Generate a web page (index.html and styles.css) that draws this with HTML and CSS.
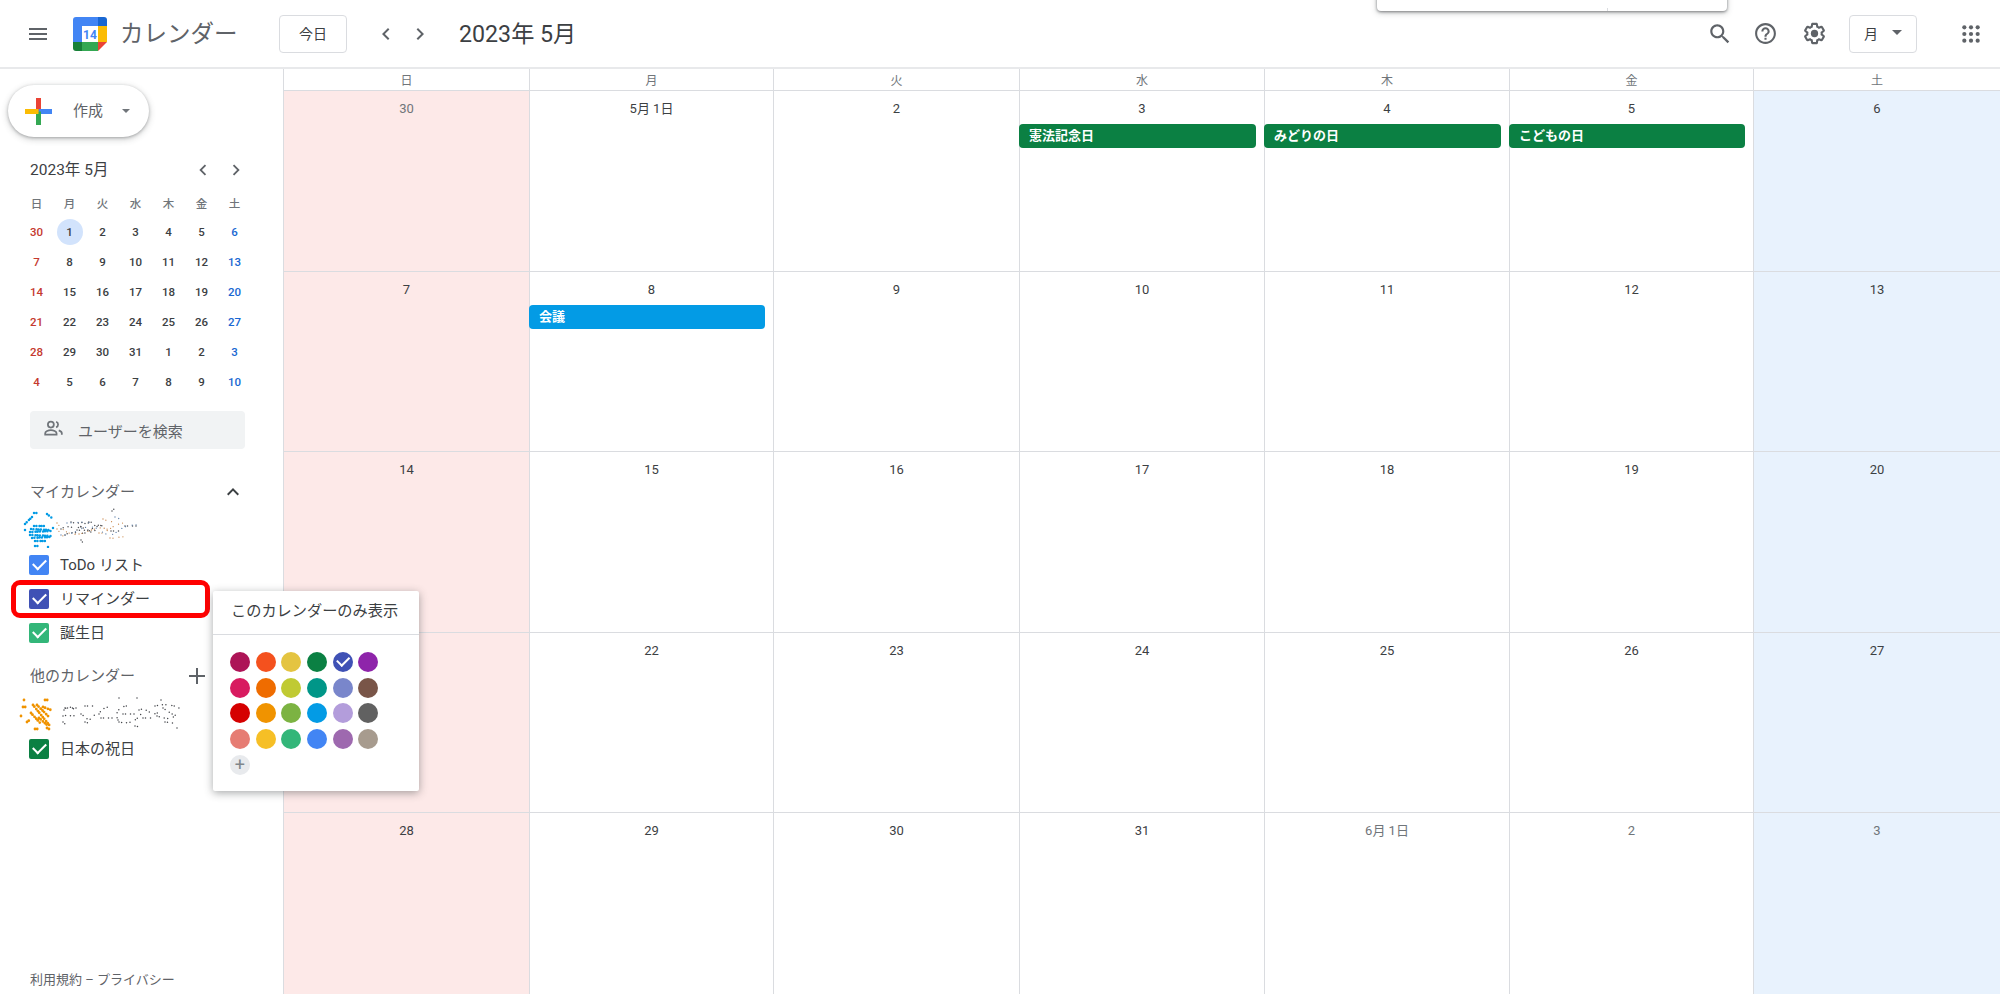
FILE: index.html
```html
<!DOCTYPE html>
<html lang="ja">
<head>
    <meta charset="UTF-8">
    <title>カレンダー</title>
    <link rel="stylesheet" href="styles.css">
</head>

<body>
<div class="top-bar">
    <svg class="ico menu-ico" viewBox="0 0 24 24"><path d="M3 18h18v-2H3v2zm0-5h18v-2H3v2zm0-7v2h18V6H3z"/></svg>
    <svg class="logo" viewBox="0 0 34 34">
        <path d="M9 34H3a3 3 0 0 1-3-3v-6h9z" fill="#188038"/>
        <path d="M25 9V0h6a3 3 0 0 1 3 3v6z" fill="#1967d2"/>
        <rect x="25" y="9" width="9" height="16" fill="#fbbc04"/>
        <rect x="9" y="25" width="16" height="9" fill="#34a853"/>
        <path d="M0 25V3a3 3 0 0 1 3-3h22v9H9v16z" fill="#4285f4"/>
        <path d="M25 25h9l-9 9z" fill="#ea4335"/>
        <text class="logo-num" x="17" y="21.5" text-anchor="middle">14</text>
    </svg>
    <span class="app-name">カレンダー</span>
    <button class="btn today-btn">今日</button>
    <svg class="ico prev-ico" viewBox="0 0 24 24"><path d="M15.41 7.41 14 6l-6 6 6 6 1.41-1.41L10.83 12z"/></svg>
    <svg class="ico next-ico" viewBox="0 0 24 24"><path d="M8.59 16.59 10 18l6-6-6-6-1.41 1.41L13.17 12z"/></svg>
    <span class="cur-month">2023年 5月</span>
    <div class="top-right">
        <svg class="ico search-ico" viewBox="0 0 24 24"><path d="M15.5 14h-.79l-.28-.27C15.41 12.59 16 11.11 16 9.5 16 5.91 13.09 3 9.5 3S3 5.91 3 9.5 5.91 16 9.5 16c1.61 0 3.09-.59 4.23-1.57l.27.28v.79l5 4.99L20.49 19l-4.99-5zm-6 0C7.01 14 5 11.99 5 9.5S7.01 5 9.5 5 14 7.01 14 9.5 11.99 14 9.5 14z"/></svg>
        <svg class="ico help-ico" viewBox="0 0 24 24"><path d="M11 18h2v-2h-2v2zm1-16C6.48 2 2 6.48 2 12s4.48 10 10 10 10-4.48 10-10S17.52 2 12 2zm0 18c-4.41 0-8-3.59-8-8s3.59-8 8-8 8 3.59 8 8-3.59 8-8 8zm0-14c-2.21 0-4 1.79-4 4h2c0-1.1.9-2 2-2s2 .9 2 2c0 2-3 1.75-3 5h2c0-2.25 3-2.5 3-5 0-2.21-1.79-4-4-4z"/></svg>
        <svg class="ico gear-ico" viewBox="0 0 24 24"><path d="M13.85 22.25h-3.7c-.74 0-1.36-.54-1.45-1.27l-.27-1.89c-.27-.14-.53-.29-.79-.46l-1.8.72c-.7.26-1.47-.03-1.81-.65L2.2 15.53c-.35-.66-.2-1.44.36-1.88l1.53-1.19c-.01-.15-.02-.3-.02-.46 0-.15.01-.31.02-.46l-1.52-1.19c-.59-.45-.74-1.26-.37-1.88l1.85-3.19c.34-.62 1.11-.9 1.79-.63l1.81.73c.26-.17.52-.32.78-.46l.27-1.91c.09-.7.71-1.25 1.44-1.25h3.7c.74 0 1.36.54 1.45 1.27l.27 1.89c.27.14.53.29.79.46l1.8-.72c.71-.26 1.48.03 1.82.65l1.84 3.18c.36.66.2 1.44-.36 1.88l-1.52 1.19c.01.15.02.3.02.46s-.01.31-.02.46l1.52 1.19c.56.45.72 1.23.37 1.86l-1.86 3.22c-.34.62-1.11.9-1.8.63l-1.8-.72c-.26.17-.52.32-.78.46l-.27 1.91c-.1.68-.72 1.22-1.46 1.22zm-3.23-2h2.76l.37-2.55.53-.22c.44-.18.88-.44 1.34-.78l.45-.34 2.38.96 1.38-2.4-2.03-1.58.07-.56c.03-.26.06-.51.06-.78s-.03-.53-.06-.78l-.07-.56 2.03-1.58-1.39-2.4-2.39.96-.45-.35c-.42-.32-.87-.58-1.33-.77l-.52-.22-.37-2.55h-2.76l-.37 2.55-.53.21c-.44.19-.88.44-1.34.79l-.45.33-2.38-.95-1.39 2.39 2.03 1.58-.07.56a7 7 0 0 0-.06.79c0 .26.02.53.06.78l.07.56-2.03 1.58 1.38 2.4 2.39-.96.45.35c.43.33.86.58 1.33.77l.53.22.38 2.55z"/><circle cx="12" cy="12" r="3.5"/></svg>
        <button class="btn view-btn">月<i class="caret"></i></button>
        <svg class="ico apps-ico" viewBox="0 0 24 24">
            <circle cx="4" cy="4" r="2.5"/><circle cx="12" cy="4" r="2.5"/><circle cx="20" cy="4" r="2.5"/>
            <circle cx="4" cy="12" r="2.5"/><circle cx="12" cy="12" r="2.5"/><circle cx="20" cy="12" r="2.5"/>
            <circle cx="4" cy="20" r="2.5"/><circle cx="12" cy="20" r="2.5"/><circle cx="20" cy="20" r="2.5"/>
        </svg>
    </div>
</div>

<div class="main">
    <div class="side">
        <button class="create-btn">
            <svg class="plus-color" viewBox="0 0 27 27">
                <rect x="11" y="0" width="5" height="13.5" fill="#ea4335"/>
                <rect x="13.5" y="11" width="13.5" height="5" fill="#4285f4"/>
                <rect x="11" y="13.5" width="5" height="13.5" fill="#34a853"/>
                <rect x="0" y="11" width="13.5" height="5" fill="#fbbc04"/>
            </svg>
            <span>作成</span>
            <i class="caret"></i>
        </button>

        <div class="mini-head">
            <span class="mini-title">2023年 5月</span>
            <svg class="ico mini-prev" viewBox="0 0 24 24"><path d="M15.41 7.41 14 6l-6 6 6 6 1.41-1.41L10.83 12z"/></svg>
            <svg class="ico mini-next" viewBox="0 0 24 24"><path d="M8.59 16.59 10 18l6-6-6-6-1.41 1.41L13.17 12z"/></svg>
        </div>
        <div class="mini-week">
            <span>日</span><span>月</span><span>火</span><span>水</span><span>木</span><span>金</span><span>土</span>
        </div>
        <div class="mini-days">
            <span class="sun">30</span><span class="today">1</span><span>2</span><span>3</span><span>4</span><span>5</span><span class="sat">6</span>
            <span class="sun">7</span><span>8</span><span>9</span><span>10</span><span>11</span><span>12</span><span class="sat">13</span>
            <span class="sun">14</span><span>15</span><span>16</span><span>17</span><span>18</span><span>19</span><span class="sat">20</span>
            <span class="sun">21</span><span>22</span><span>23</span><span>24</span><span>25</span><span>26</span><span class="sat">27</span>
            <span class="sun">28</span><span>29</span><span>30</span><span>31</span><span>1</span><span>2</span><span class="sat">3</span>
            <span class="sun">4</span><span>5</span><span>6</span><span>7</span><span>8</span><span>9</span><span class="sat">10</span>
        </div>

        <div class="user-search">
            <svg class="people-ico" viewBox="0 0 24 24">
                <circle cx="9" cy="7.5" r="3.4"/>
                <path d="M2.5 19v-1.6c0-2.2 3.6-3.6 6.5-3.6s6.5 1.4 6.5 3.6V19z"/>
                <path d="M15 4.3a3.4 3.4 0 0 1 0 6.4M18 14.2c1.9.6 3.5 1.7 3.5 3.2V19"/>
            </svg>
            <span>ユーザーを検索</span>
        </div>

        <div class="cal-head my-head">
            <span>マイカレンダー</span>
            <svg class="ico up-ico" viewBox="0 0 24 24"><path d="M7.41 15.41 12 10.83l4.59 4.58L18 14l-6-6-6 6z"/></svg>
        </div>
        <!-- 名前はモザイク -->
        <svg class="blur-name blur-1" viewBox="0 0 135 43">
            <g fill="none" stroke="#039be5" stroke-width="2.5" stroke-linecap="round" stroke-dasharray="0 2.4 0 3.1 0 2">
                <path d="M19 21h12M16 24l18 1M15 27l21-1M15 30l21 1M17 33l18-1M20 36h11"/>
                <path d="M10 19l8-8M32 9l5 4M19 8h5M10 25l2-1M20 41h3M33 42h1M38 23h1"/>
            </g>
            <g fill="none" stroke="#4f5156" stroke-width="1.5" stroke-linecap="round" stroke-dasharray="0 2.5 0 5 0 3.5 0 7">
                <path d="M46 24c8-6 14 3 22-4s12 6 20 0"/>
                <path d="M50 30c8-6 16 2 24-4s10-8 16-3"/>
                <path d="M56 17c8 3 14-2 24 1M62 25c6 1 12-1 20 1M66 35l2 3M97 6l2-2M96 26h8M110 21h14M66 22l16 8"/>
            </g>
            <g fill="none" stroke="#c9874a" stroke-width="1.3" stroke-linecap="round" stroke-dasharray="0 3 0 6 0 4">
                <path d="M42 18c6 8 14 14 26 10s18-8 28-2M84 28c6 2 12-8 24-10M95 33c5 1 10-2 14-1M42 24l6 7M88 14c4 2 8 2 12 4"/>
            </g>
            <g fill="none" stroke="#5c7ea8" stroke-width="1.3" stroke-linecap="round" stroke-dasharray="0 4 0 7">
                <path d="M46 30c14 2 24-16 40-4s14-8 38-6M52 18c8 0 16-2 24 0M100 12l10 4"/>
            </g>
        </svg>
        <div class="cal-row"><i class="check c-blue"></i><span>ToDo リスト</span></div>
        <div class="cal-row marked"><i class="check c-indigo"></i><span>リマインダー</span></div>
        <div class="cal-row"><i class="check c-green"></i><span>誕生日</span></div>

        <div class="cal-head other-head">
            <span>他のカレンダー</span>
            <svg class="ico add-ico" viewBox="0 0 24 24"><path d="M20 13h-7v7h-2v-7H4v-2h7V4h2v7h7v2z"/></svg>
        </div>
        <svg class="blur-name blur-2" viewBox="0 0 195 40">
            <g fill="none" stroke="#f09300" stroke-width="2.8" stroke-linecap="round" stroke-dasharray="0 2.2 0 3 0 2.6">
                <path d="M18 13l17 21M22 13l12 12M16 21l10 11M24 26l8 7M28 15l8 3M30 8h5M9 8h1M8 15h3M6 24h2M12 30l4-3M20 37h5M32 36l2 1"/>
            </g>
            <g fill="none" stroke="#45474c" stroke-width="1.5" stroke-linecap="round" stroke-dasharray="0 2.5 0 5 0 3.5 0 6">
                <path d="M49 18c4-6 10-2 12 2M48 24c6-2 10 2 14-2M66 22c6 4 8 10 14 0M84 22c3-6 8-8 14-6M50 16h12M70 14h10M86 26h12"/>
                <path d="M103 28c-4-8 2-14 10-14M104 30c10 2 16 0 22-8M124 18c8-4 12 8 20 2M140 14c8-2 16-2 24 2M142 24c6 2 16 6 20-4M150 30l8 1M108 22h14M128 26h10M148 16l12 8"/>
                <path d="M104 6h1M122 6h1M146 8h1M48 30l4 4M70 30l6 2M120 34l6 1M162 36h1"/>
            </g>
        </svg>
        <div class="cal-row"><i class="check c-dark"></i><span>日本の祝日</span></div>

        <div class="side-foot">利用規約 – プライバシー</div>
    </div>

    <div class="cal">
        <div class="week-row">
            <span>日</span><span>月</span><span>火</span><span>水</span><span>木</span><span>金</span><span>土</span>
        </div>
        <div class="month-grid">
            <div class="cell sun-bg"><p class="num dim">30</p></div>
            <div class="cell"><p class="num">5月 1日</p></div>
            <div class="cell"><p class="num">2</p></div>
            <div class="cell"><p class="num">3</p><div class="ev ev-green">憲法記念日</div></div>
            <div class="cell"><p class="num">4</p><div class="ev ev-green">みどりの日</div></div>
            <div class="cell"><p class="num">5</p><div class="ev ev-green">こどもの日</div></div>
            <div class="cell sat-bg"><p class="num">6</p></div>

            <div class="cell sun-bg"><p class="num">7</p></div>
            <div class="cell"><p class="num">8</p><div class="ev ev-blue">会議</div></div>
            <div class="cell"><p class="num">9</p></div>
            <div class="cell"><p class="num">10</p></div>
            <div class="cell"><p class="num">11</p></div>
            <div class="cell"><p class="num">12</p></div>
            <div class="cell sat-bg"><p class="num">13</p></div>

            <div class="cell sun-bg"><p class="num">14</p></div>
            <div class="cell"><p class="num">15</p></div>
            <div class="cell"><p class="num">16</p></div>
            <div class="cell"><p class="num">17</p></div>
            <div class="cell"><p class="num">18</p></div>
            <div class="cell"><p class="num">19</p></div>
            <div class="cell sat-bg"><p class="num">20</p></div>

            <div class="cell sun-bg"><p class="num">21</p></div>
            <div class="cell"><p class="num">22</p></div>
            <div class="cell"><p class="num">23</p></div>
            <div class="cell"><p class="num">24</p></div>
            <div class="cell"><p class="num">25</p></div>
            <div class="cell"><p class="num">26</p></div>
            <div class="cell sat-bg"><p class="num">27</p></div>

            <div class="cell sun-bg"><p class="num">28</p></div>
            <div class="cell"><p class="num">29</p></div>
            <div class="cell"><p class="num">30</p></div>
            <div class="cell"><p class="num">31</p></div>
            <div class="cell"><p class="num dim">6月 1日</p></div>
            <div class="cell"><p class="num dim">2</p></div>
            <div class="cell sat-bg"><p class="num dim">3</p></div>
        </div>
    </div>
</div>

<!-- 上にはみ出したポップアップ -->
<div class="peek-card"><i></i></div>

<!-- カレンダーの色メニュー -->
<div class="color-menu">
    <div class="color-tit">このカレンダーのみ表示</div>
    <div class="color-grid">
        <i class="dot" style="background:#ad1457"></i><i class="dot" style="background:#f4511e"></i><i class="dot" style="background:#e4c441"></i><i class="dot" style="background:#0b8043"></i><i class="dot on" style="background:#3f51b5"></i><i class="dot" style="background:#8e24aa"></i>
        <i class="dot" style="background:#d81b60"></i><i class="dot" style="background:#ef6c00"></i><i class="dot" style="background:#c0ca33"></i><i class="dot" style="background:#009688"></i><i class="dot" style="background:#7986cb"></i><i class="dot" style="background:#795548"></i>
        <i class="dot" style="background:#d50000"></i><i class="dot" style="background:#f09300"></i><i class="dot" style="background:#7cb342"></i><i class="dot" style="background:#039be5"></i><i class="dot" style="background:#b39ddb"></i><i class="dot" style="background:#616161"></i>
        <i class="dot" style="background:#e67c73"></i><i class="dot" style="background:#f6bf26"></i><i class="dot" style="background:#33b679"></i><i class="dot" style="background:#4285f4"></i><i class="dot" style="background:#9e69af"></i><i class="dot" style="background:#a79b8e"></i>
        <i class="dot dot-add">+</i>
    </div>
</div>
</body>
</html>
```

FILE: styles.css
```css
*, *::after { margin: 0; padding: 0; box-sizing: border-box; }
html, body { height: 100%; overflow: hidden; }
body { position: relative; display: flex; flex-direction: column; background: #fff; color: #3c4043; font-family: Roboto, "Noto Sans CJK JP", sans-serif; }
i { font-style: normal; display: block; }
button { font-family: inherit; background: #fff; cursor: pointer; }
.ico { width: 24px; height: 24px; fill: #5f6368; flex: none; display: block; }
.caret { width: 0; height: 0; border: 5px solid transparent; border-top-color: #5f6368; border-bottom: 0; }

/*ヘッダー*/
.top-bar { height: 69px; flex: none; display: flex; align-items: center; border-bottom: 2px solid #e8e9eb; padding-left: 26px; }
.logo { width: 34px; height: 34px; margin-left: 23px; flex: none; }
.logo-num { font: 700 12px Roboto, sans-serif; fill: #4285f4; }
.app-name { font-size: 23.5px; color: #5f6368; margin-left: 13px; width: 159px; flex: none; padding-bottom: 3px; }
.btn { border: 1px solid #dadce0; border-radius: 4px; height: 38px; font-size: 14px; color: #3c4043; padding-bottom: 2px; }
.today-btn { width: 68px; flex: none; }
.prev-ico { margin-left: 27px; }
.next-ico { margin-left: 10px; }
.cur-month { font-size: 23.2px; margin-left: 27px; color: #3c4043; padding-bottom: 4px; }
.top-right { margin-left: auto; display: flex; align-items: center; padding-right: 19px; }
.search-ico { width: 26px; height: 26px; }
.help-ico { margin-left: 20px; width: 25px; height: 25px; }
.gear-ico { margin-left: 24px; width: 25px; height: 25px; }
.view-btn { margin-left: 22px; width: 68px; display: flex; align-items: center; padding-left: 14px; gap: 14px; }
.apps-ico { margin-left: 44px; width: 20px; height: 20px; }

.main { flex: 1; display: flex; min-height: 0; }

/*左のサイド*/
.side { width: 283px; flex: none; display: flex; flex-direction: column; }
.create-btn { margin: 16px 0 0 8px; width: 141px; height: 52px; border: 0; border-radius: 26px; box-shadow: 0 1px 3px rgba(60,64,67,.35), 0 2px 6px 1px rgba(60,64,67,.2); display: flex; align-items: center; padding-left: 17px; font-size: 15px; color: #5f6368; }
.create-btn span { margin-bottom: 4px; }
.plus-color { width: 27px; height: 27px; margin-right: 21px; }
.create-btn .caret { margin-left: 19px; border-width: 4px; border-bottom: 0; border-top-color: #70757a; }

.mini-head { margin: 21px 0 0 30px; height: 24px; display: flex; align-items: center; }
.mini-title { font-size: 15.5px; width: 162px; color: #3c4043; padding-bottom: 5px; }
.mini-prev { width: 22px; height: 22px; }
.mini-next { width: 22px; height: 22px; margin-left: 11px; }
.mini-week, .mini-days { margin-left: 20px; display: grid; grid-template-columns: repeat(7, 33px); text-align: center; font-size: 11.5px; font-weight: 500; }
.mini-week { margin-top: 9px; height: 26px; line-height: 26px; color: #70757a; }
.mini-days span { height: 30px; line-height: 30px; }
.mini-days .sun { color: #c5392f; }
.mini-days .sat { color: #1967d2; }
.mini-days .today { background: #d2e3fc; width: 26px; height: 26px; line-height: 26px; border-radius: 50%; margin: 2px auto; color: #3c4043; }

.user-search { margin: 14px 0 0 30px; width: 215px; height: 38px; background: #f1f3f4; border-radius: 4px; display: flex; align-items: center; padding-left: 13px; font-size: 15px; color: #5f6368; }
.people-ico { width: 21px; height: 21px; margin-right: 14px; margin-top: -3px; fill: none; stroke: #70757a; stroke-width: 2; }

.cal-head { margin-left: 30px; height: 24px; display: flex; align-items: center; justify-content: space-between; font-size: 15px; color: #5f6368; }
.cal-head span { margin-bottom: 3px; }
.my-head { margin-top: 31px; width: 215px; }
.other-head { margin-top: 14px; width: 179px; }
.up-ico { fill: #3c4043; }

.blur-name { display: block; flex: none; margin-left: 15px; }
.blur-1 { width: 135px; height: 43px; margin-top: 1px; }
.blur-2 { width: 195px; height: 40px; margin-top: 4px; }

.cal-row { position: relative; height: 34px; flex: none; display: flex; align-items: center; padding-left: 29px; font-size: 15px; color: #3c4043; }
.cal-row span { margin-bottom: 3px; }
.cal-row .check { width: 20px; height: 20px; border-radius: 2px; margin-right: 11px; position: relative; }
.check::after { content: ""; position: absolute; left: 3.5px; top: 4px; width: 13px; height: 8px; border-left: 2px solid #fff; border-bottom: 2px solid #fff; transform: rotate(-45deg); }
.c-blue { background: #4285f4; }
.c-indigo { background: #3f51b5; }
.c-green { background: #33b679; }
.c-dark { background: #0b8043; }
/*赤い枠*/
.marked::after { content: ""; position: absolute; left: 11px; top: -2px; width: 199px; height: 38px; border: 5px solid #f00; border-radius: 9px; }

.side-foot { margin-top: auto; padding: 0 0 6px 30px; font-size: 13px; line-height: 16px; color: #5f6368; }

/*カレンダー本体*/
.cal { flex: 1; min-width: 0; display: flex; flex-direction: column; }
.week-row, .month-grid { display: grid; grid-template-columns: 246px 244px 246px 245px 245px 244px 1fr; }
.week-row { height: 22px; flex: none; text-align: center; font-size: 12px; line-height: 24px; color: #70757a; border-bottom: 1px solid #dadce0; }
.week-row span { border-left: 1px solid #dadce0; }
.month-grid { flex: 1; grid-template-rows: repeat(5, 1fr); min-height: 0; }
.cell { border-left: 1px solid #dadce0; border-bottom: 1px solid #dadce0; min-width: 0; padding-top: 10px; }
.month-grid .cell:nth-child(n+29) { border-bottom: 0; }
.sun-bg { background: #fde9e8; }
.sat-bg { background: #e8f2fd; }
.num { text-align: center; font-size: 13px; line-height: 16px; font-weight: 400; color: #3c4043; }
.num.dim { color: #70757a; }
.ev { height: 24px; margin: 7px 8px 0 -1px; padding-left: 10px; border-radius: 4px; font-size: 13px; font-weight: 700; line-height: 24px; color: #fff; }
.ev-green { background: #0b8043; }
.ev-blue { background: #039be5; }

/*上のカード*/
.peek-card { position: absolute; left: 1377px; top: -10px; width: 350px; height: 21px; background: #fff; border-radius: 4px; box-shadow: 0 1px 3px rgba(60,64,67,.6), 0 2px 6px rgba(60,64,67,.25); }
.peek-card i { position: absolute; left: 230px; bottom: 0; height: 3px; width: 1px; background: #dadce0; }

/*色メニュー*/
.color-menu { position: absolute; left: 213px; top: 591px; width: 206px; height: 200px; background: #fff; border-radius: 2px; box-shadow: 0 2px 8px rgba(60,64,67,.45); }
.color-tit { height: 44px; line-height: 40px; padding-left: 18px; font-size: 15.2px; color: #3c4043; border-bottom: 1px solid #dadce0; }
.color-grid { padding: 14px 0 0 14px; display: grid; grid-template-columns: repeat(6, 25.7px); grid-auto-rows: 25.7px; place-items: center; }
.dot { width: 20px; height: 20px; border-radius: 50%; position: relative; }
.dot.on::after { content: ""; position: absolute; left: 4px; top: 4px; width: 12px; height: 7.5px; border-left: 2px solid #fff; border-bottom: 2px solid #fff; transform: rotate(-45deg); }
.dot-add { background: #e8eaed; color: #80868b; font-size: 18px; line-height: 19px; text-align: center; font-weight: 400; }
```
